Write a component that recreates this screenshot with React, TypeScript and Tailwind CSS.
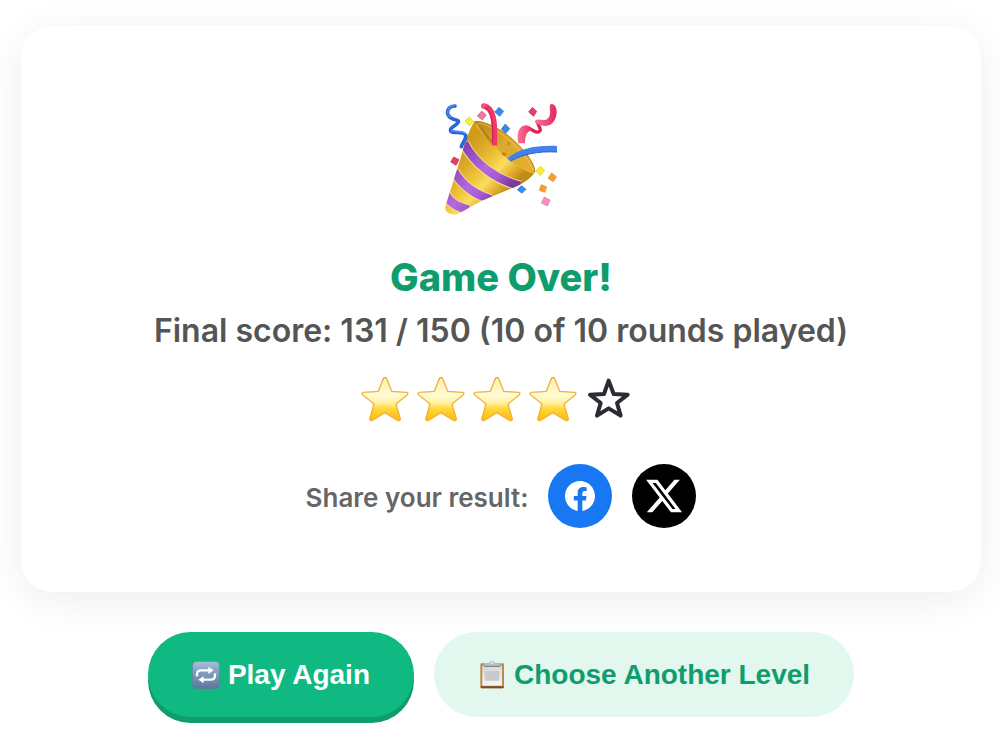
interface IconProps {
  className?: string;
}

function PartyPopper({ className }: IconProps) {
  return (
    <svg viewBox="42 36 342 342" className={className} role="img" aria-label="Party popper">
      <defs>
        <linearGradient id="cone" gradientUnits="userSpaceOnUse" x1="78" y1="200" x2="212" y2="325">
          <stop offset="0" stopColor="#d09a1c" />
          <stop offset="0.25" stopColor="#e0ae2a" />
          <stop offset="0.5" stopColor="#f2c940" />
          <stop offset="0.65" stopColor="#fadd62" />
          <stop offset="0.82" stopColor="#e6b432" />
          <stop offset="1" stopColor="#c08a18" />
        </linearGradient>
        <linearGradient id="band" gradientUnits="userSpaceOnUse" x1="90" y1="190" x2="220" y2="310">
          <stop offset="0" stopColor="#8843b8" />
          <stop offset="0.5" stopColor="#b36ade" />
          <stop offset="0.75" stopColor="#a458d3" />
          <stop offset="1" stopColor="#7a389f" />
        </linearGradient>
        <linearGradient id="inside" x1="0" y1="0" x2="1" y2="1">
          <stop offset="0" stopColor="#b98415" />
          <stop offset="0.45" stopColor="#dca92b" />
          <stop offset="1" stopColor="#e5b135" />
        </linearGradient>
        <linearGradient id="pink" x1="0" y1="0" x2="1" y2="0">
          <stop offset="0" stopColor="#f77699" />
          <stop offset="1" stopColor="#e5265a" />
        </linearGradient>
        <clipPath id="coneShape">
          <path d="M134 94C121 111 106 152 93 200L46 350C44 368 61 377 82 373L155 332L257 290C282 280 305 263 314 247C296 246 262 230 224 196C184 160 151 120 134 94Z" />
        </clipPath>
      </defs>
      <g clipPath="url(#coneShape)">
        <path d="M40 80H330V380H40Z" fill="url(#cone)" />
        <g fill="none" stroke="#f5df87" strokeWidth="32">
          <path d="M102 160C133 221 194 267 270 288" />
          <path d="M72 244C96 285 129 312 182 328" />
          <path d="M46 312C57 334 72 347 116 360" />
        </g>
        <g fill="none" stroke="url(#band)" strokeWidth="26">
          <path d="M102 160C133 221 194 267 270 288" />
          <path d="M72 244C96 285 129 312 182 328" />
          <path d="M46 312C57 334 72 347 116 360" />
        </g>
      </g>
      <path
        d="M134 95C155 90 211 113 251 151C285 182 316 222 314 246C299 251 258 226 218 192C176 156 144 119 134 95Z"
        fill="url(#inside)"
        stroke="#b67f12"
        strokeWidth="3"
      />
      <path d="M145 99C177 103 224 135 258 169C283 195 305 225 309 240" fill="none" stroke="#f4cc5b" strokeWidth="2" />
      <path d="M137 101C151 126 191 171 232 203C265 230 295 247 312 248" fill="none" stroke="#e9b735" strokeWidth="4" />
      <path d="M148 106L186 151V164C169 146 154 126 148 106Z" fill="#94680f" opacity=".5" />
      <path d="M216 187L230 190L227 199L216 195ZM234 154L243 161L233 168Z" fill="#c08a1b" />
      <path d="M161 48C190 52 197 92 193 166" fill="none" stroke="#f0386a" strokeWidth="16" />
      <circle cx="161" cy="48" r="8" fill="#f4517b" />
      <path d="M163 53C185 60 190 96 188 158" fill="none" stroke="#d82257" strokeWidth="4" />
      <path d="M232 206C265 176 318 165 381 168V186C319 183 278 193 242 214Z" fill="#4382ed" />
      <path d="M242 213C280 192 324 183 381 186" fill="none" stroke="#235dc9" strokeWidth="3" />
      <path
        d="M75 48C50 49 46 73 63 84C77 93 91 88 83 99C76 109 57 113 62 123C70 133 100 121 107 136C110 147 98 156 94 170"
        fill="none"
        stroke="#2867d6"
        strokeWidth="11"
        strokeLinejoin="round"
        strokeLinecap="round"
      />
      <path d="M74 46C52 48 46 73 64 82M63 121C77 127 100 120 106 133" fill="none" stroke="#578ef3" strokeWidth="4" />
      <path
        d="M290 114C308 114 311 130 325 126C341 121 318 101 323 92"
        fill="none"
        stroke="#d9245a"
        strokeWidth="10"
      />
      <path d="M265 160C259 135 264 107 288 106C296 107 304 112 310 121C290 121 285 138 285 160Z" fill="url(#pink)" />
      <path
        d="M315 97C313 85 330 88 341 90C354 90 362 78 360 62C359 52 358 43 364 42C374 42 380 52 380 66C379 90 367 106 347 108C332 108 320 103 315 97Z"
        fill="url(#pink)"
      />
      <g strokeWidth="2">
        <path d="M118 81L130 94L118 107L105 93Z" fill="#faef35" stroke="#d7c51b" />
        <path d="M155 63L169 75L157 90L142 78Z" fill="#f0789e" stroke="#c95b7e" />
        <path d="M207 52L221 64L209 79L194 66Z" fill="#3989ee" stroke="#2671d0" />
        <path d="M226 102L239 116L227 130L214 117Z" fill="#3989ee" stroke="#1f62b8" />
        <path d="M307 52L320 64L311 79L296 66Z" fill="#e93d67" stroke="#c52750" />
        <path d="M71 201L87 209L78 226L62 216Z" fill="#e93d67" stroke="#b9284d" />
        <path d="M331 229L344 242L331 256L317 244Z" fill="#fcee35" stroke="#d8c620" />
        <path d="M365 249L379 260L370 275L354 265Z" fill="#fa9d30" stroke="#da8220" />
        <path d="M334 284L350 291L344 307L328 301Z" fill="#fa9d30" stroke="#da8220" />
        <path d="M274 287L288 298L276 310L262 299Z" fill="#388bef" stroke="#246bc8" />
        <path d="M343 321L360 330L352 348L334 339Z" fill="#f98fbe" stroke="#dc72a1" />
      </g>
    </svg>
  );
}

function GoldStar() {
  return (
    <svg viewBox="0 0 144 144" className="size-12" aria-hidden="true">
      <defs>
        <linearGradient id="starFill" x1="0" y1="0" x2="0" y2="1">
          <stop offset="0" stopColor="#fff0a8" />
          <stop offset="0.42" stopColor="#fffbd5" />
          <stop offset="0.6" stopColor="#fff09a" />
          <stop offset="0.72" stopColor="#ffd83a" />
          <stop offset="1" stopColor="#fbb915" />
        </linearGradient>
        <linearGradient id="starEdge" x1="0" y1="0" x2="0" y2="1">
          <stop offset="0" stopColor="#e8ad42" />
          <stop offset="0.45" stopColor="#f0b544" />
          <stop offset="1" stopColor="#f6b424" />
        </linearGradient>
      </defs>
      <path
        d="M67 8Q72 1 77 8L92 46L137 49Q144 51 139 56L105 84L118 129Q118 136 110 133L72 110L34 133Q26 136 26 129L39 84L5 56Q0 51 7 49L52 46Z"
        fill="url(#starFill)"
        stroke="url(#starEdge)"
        strokeWidth="4"
        strokeLinejoin="round"
      />
    </svg>
  );
}

function EmptyStar() {
  return (
    <svg viewBox="0 0 144 144" className="size-12" aria-hidden="true">
      <path
        d="M71 14L86 54L128 56L96 81L107 119L71 97L36 119L47 81L15 56L57 54Z"
        fill="none"
        stroke="#2c2a33"
        strokeWidth="12"
        strokeLinejoin="round"
      />
    </svg>
  );
}

function FacebookIcon() {
  return (
    <svg viewBox="0 0 24 24" className="size-[30px]" fill="currentColor" aria-hidden="true">
      <path d="M24 12.073c0-6.627-5.373-12-12-12s-12 5.373-12 12c0 5.99 4.388 10.954 10.125 11.854v-8.385H7.078v-3.47h3.047V9.43c0-3.007 1.792-4.669 4.533-4.669 1.312 0 2.686.235 2.686.235v2.953H15.83c-1.491 0-1.956.925-1.956 1.874v2.25h3.328l-.532 3.47h-2.796v8.385C19.612 23.027 24 18.062 24 12.073z" />
    </svg>
  );
}

function XIcon() {
  return (
    <svg viewBox="0 0 24 24" className="size-10" fill="currentColor" aria-hidden="true">
      <path d="M18.244 2.25h3.308l-7.227 8.26 8.502 11.24H16.17l-5.214-6.817L4.99 21.75H1.68l7.73-8.835L1.254 2.25H8.08l4.713 6.231zm-1.161 17.52h1.833L7.084 4.126H5.117z" />
    </svg>
  );
}

function RepeatIcon() {
  return (
    <svg viewBox="0 0 84 84" className="size-7" aria-hidden="true">
      <defs>
        <linearGradient id="tile" x1="0" y1="0" x2="0" y2="1">
          <stop offset="0" stopColor="#a9c1d9" />
          <stop offset="0.35" stopColor="#86a2c1" />
          <stop offset="1" stopColor="#5c7799" />
        </linearGradient>
      </defs>
      <rect x="1" y="1" width="82" height="82" rx="13" fill="url(#tile)" stroke="#5d7b9b" strokeWidth="2" />
      <g fill="none" stroke="white" strokeWidth="7">
        <path d="M15 46V40Q15 28 28 28H54" />
        <path d="M69 37V43Q69 56 56 56H31" />
      </g>
      <path d="M49 17L65 28L49 39ZM35 45L19 56L35 67Z" fill="white" />
    </svg>
  );
}

function ClipboardIcon() {
  return (
    <svg viewBox="0 0 84 84" className="size-7" aria-hidden="true">
      <defs>
        <linearGradient id="paper" x1="0" y1="0" x2="0" y2="1">
          <stop offset="0" stopColor="#d9d9db" />
          <stop offset="1" stopColor="#f8f8f8" />
        </linearGradient>
      </defs>
      <rect x="7" y="7" width="71" height="75" rx="4" fill="#bd8a4b" />
      <path d="M8 76H77V79Q77 82 73 82H12Q8 82 8 79Z" fill="#7b4b27" />
      <rect x="13" y="14" width="59" height="60" fill="url(#paper)" />
      <path d="M20 24H31M20 67H31" stroke="#ccc" strokeWidth="2" />
      <rect x="20" y="29" width="44" height="30" rx="2" fill="#cacacc" />
      <path d="M18 7H34Q35 0 43 0Q50 0 51 7H67V15H18Z" fill="#b6bec7" />
      <path d="M18 16H67" stroke="#75777a" strokeWidth="3" />
      <circle cx="43" cy="6" r="3" fill="#e2f7ee" />
    </svg>
  );
}

function Rating({ value, max }: { value: number; max: number }) {
  return (
    <div className="mt-6 flex gap-2 pr-2" role="img" aria-label={`${value} out of ${max} stars`}>
      {Array.from({ length: max }, (_, i) => (i < value ? <GoldStar key={i} /> : <EmptyStar key={i} />))}
    </div>
  );
}

export default function App() {
  return (
    <main className="min-h-screen bg-white pt-[25px] pr-[19px] pb-8 pl-[21px] font-['Inter',sans-serif]">
      <section className="flex flex-col items-center rounded-[32px] bg-white px-8 pt-[77px] pb-16 text-center shadow-[0_8px_40px_rgba(0,0,0,0.07)]">
        <PartyPopper className="size-[114px]" />
        <h1 className="mt-9 text-[38px] leading-[50px] font-extrabold text-[#0f9d6e]">Game Over!</h1>
        <p className="mt-2 text-[32px] leading-[42px] font-semibold text-[#555555]">
          Final score: 131 / 150 (10 of 10 rounds played)
        </p>
        <Rating value={4} max={5} />
        <div className="mt-10 flex items-center gap-5">
          <span className="pt-1 text-[26px] leading-8 font-semibold text-[#666666]">Share your result:</span>
          <a
            href="#facebook"
            aria-label="Share on Facebook"
            className="flex size-16 items-center justify-center rounded-full bg-[#1877f2] text-white"
          >
            <FacebookIcon />
          </a>
          <a
            href="#x"
            aria-label="Share on X"
            className="flex size-16 items-center justify-center rounded-full bg-black text-white"
          >
            <XIcon />
          </a>
        </div>
      </section>

      <div className="mt-10 flex flex-wrap justify-center gap-5 font-['Liberation_Sans',sans-serif] text-[28px] leading-8 font-bold">
        <button
          type="button"
          className="flex h-[85px] items-center gap-2 rounded-full bg-[#10b981] px-11 text-white shadow-[0_6px_0_#0f9d6e]"
        >
          <RepeatIcon />
          Play Again
        </button>
        <button
          type="button"
          className="flex h-[85px] items-center gap-2 rounded-full bg-[#e2f7ee] px-11 text-[#0f9d6e]"
        >
          <ClipboardIcon />
          Choose Another Level
        </button>
      </div>
    </main>
  );
}
